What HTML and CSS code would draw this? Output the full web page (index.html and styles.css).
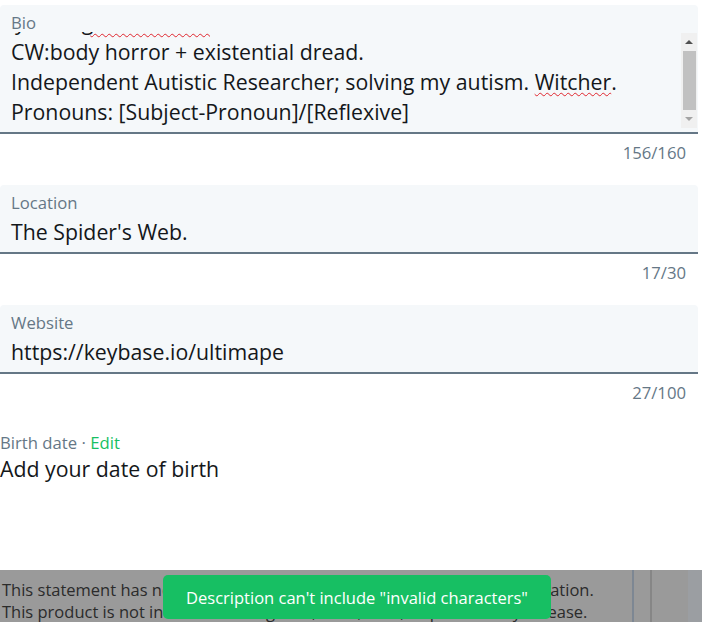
FILE: index.html
```html
<!DOCTYPE html>
<html>
<head>
<meta charset="utf-8">
<link rel="stylesheet" href="styles.css">
</head>
<body>
<div class="form">
  <div class="field field-bio">
    <div class="field-main">
      <div class="label">Bio</div>
      <div class="textarea">
        <div class="lines">
          <div class="line line-partial"><span class="frag f1">y</span><span class="frag f2">g</span><span class="spell squiggle">xxxxxxxxxxxxxxxxxxxxxx</span></div>
          <div class="line">CW:body horror + existential dread.</div>
          <div class="line">Independent Autistic Researcher; solving my autism. <span class="spell">Witcher</span>.</div>
          <div class="line">Pronouns: [Subject-Pronoun]/[Reflexive]</div>
        </div>
      </div>
    </div>
    <div class="scrollbar">
      <span class="arrow arrow-up"></span>
      <span class="thumb"></span>
      <span class="arrow arrow-down"></span>
    </div>
  </div>
  <div class="counter">156/160</div>

  <div class="field">
    <div class="field-main">
      <div class="label">Location</div>
      <div class="value">The Spider's Web.</div>
    </div>
  </div>
  <div class="counter">17/30</div>

  <div class="field">
    <div class="field-main">
      <div class="label">Website</div>
      <div class="value">https://keybase.io/ultimape</div>
    </div>
  </div>
  <div class="counter">27/100</div>

  <div class="birth">
    <div class="birth-label">Birth date · <a class="edit">Edit</a></div>
    <div class="birth-value">Add your date of birth</div>
  </div>
</div>

<div class="footer">
  <div class="footer-text">
    <div>This statement has not been evaluated by the Food and Drug Administration.</div>
    <div>This product is not intended to diagnose, treat, cure, or prevent any disease.</div>
  </div>
  <div class="footer-cols">
    <span class="col-line dark"></span>
    <span class="col-line"></span>
    <span class="col-edge"></span>
  </div>
  <div class="toast">Description can't include "invalid characters"</div>
</div>
</body>
</html>
```
FILE: styles.css
```css
* { box-sizing: border-box; }
html, body { margin: 0; padding: 0; }
body {
  width: 702px;
  height: 622px;
  overflow: hidden;
  background: #fff;
  font-family: "Open Sans", "Noto Sans", sans-serif;
  color: #14171a;
  display: flex;
  flex-direction: column;
}
.form {
  width: 698px;
  padding-top: 5px;
  display: flex;
  flex-direction: column;
  flex: 1;
}
.field {
  display: flex;
  background: #f5f8fa;
  border-radius: 4px 4px 0 0;
  border-bottom: 2px solid #657786;
}
.field-main {
  flex: 1;
  padding: 8px 11px 5px 11px;
  min-width: 0;
}
.label {
  font-size: 16.7px;
  line-height: 19px;
  color: #657786;
}
.value {
  font-size: 21.3px;
  line-height: 30px;
  margin-top: 5px;
}
.field-bio .field-main { padding-bottom: 0; }
.textarea {
  height: 100px;
  overflow: hidden;
}
.lines {
  margin-top: -25px;
  font-size: 21.3px;
  line-height: 30px;
}
.line { white-space: nowrap; height: 30px; }
.line-partial { display: flex; align-items: baseline; }
.frag { display: inline-block; }
.f1 { margin-left: 4px; }
.f2 { margin-left: 56px; }
.squiggle {
  display: inline-block;
  width: 120px;
  line-height: 30px;
  overflow: hidden;
  margin-left: -3px;
  color: transparent;
  font-size: 15.5px;
  text-underline-offset: 3px;
}
.spell {
  text-decoration: underline wavy #e0262e;
  text-decoration-thickness: 1px;
  text-decoration-skip-ink: none;
}
.line .spell:not(.squiggle) { text-underline-offset: 2px; }
.scrollbar {
  width: 16px;
  margin: 28px 1px 4px 0;
  background: #f0f0f0;
  display: flex;
  flex-direction: column;
  align-items: center;
}
.arrow {
  width: 0; height: 0;
  border-left: 4px solid transparent;
  border-right: 4px solid transparent;
  margin: 7px 0;
}
.arrow-up { border-bottom: 4px solid #505050; }
.arrow-down { border-top: 4px solid #a3a3a3; }
.thumb {
  width: 13px;
  flex: 1;
  background: #c1c1c1;
}
.counter {
  text-align: right;
  padding-right: 12px;
  font-size: 16.7px;
  line-height: 20px;
  color: #657786;
  margin: 9px 0 22px;
}
.birth { margin-top: 8px; }
.birth-label {
  font-size: 16.7px;
  line-height: 20px;
  color: #657786;
}
.edit { color: #17bf63; }
.birth-value {
  font-size: 21.3px;
  line-height: 26px;
  margin-top: 3px;
}
.footer {
  height: 52px;
  background: #9a9a9a;
  position: relative;
  display: flex;
  overflow: hidden;
}
.footer-text {
  flex: 1;
  padding: 9px 0 0 2px;
  font-size: 16.5px;
  line-height: 22px;
  color: #2b2b2b;
  white-space: nowrap;
}
.footer-cols {
  width: 70px;
  display: flex;
}
.col-line { width: 2px; background: #868686; margin-left: 16px; }
.col-line.dark { background: #7d8793; margin-left: 0; }
.col-edge { flex: 1; margin-left: 36px; background: #9b9ea2; }
.toast {
  position: absolute;
  left: 163px;
  top: 5px;
  width: 388px;
  height: 44px;
  border-radius: 5px;
  background: #17bf63;
  color: #fff;
  font-size: 16.5px;
  display: flex;
  align-items: center;
  justify-content: center;
}
```
